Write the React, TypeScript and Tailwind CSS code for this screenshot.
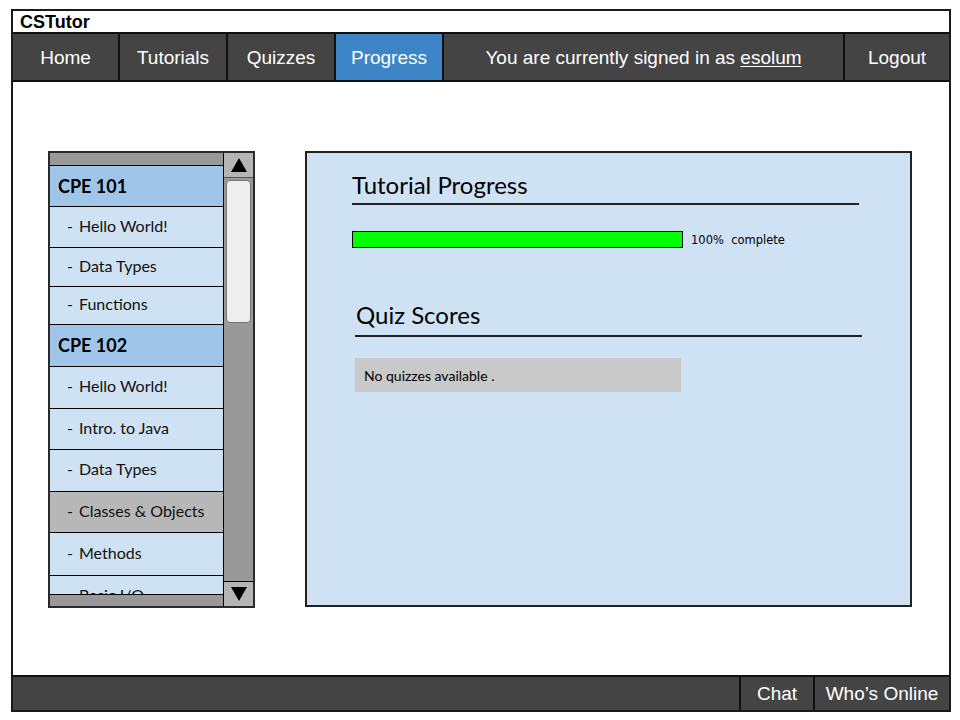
import React from "react";

const navItems = [
  { label: "Home", w: "w-[107px]" },
  { label: "Tutorials", w: "w-[108px]" },
  { label: "Quizzes", w: "w-[108px]" },
];

type Row = { label: string; kind: "head" | "item" | "sel"; h: string };

const rows: Row[] = [
  { label: "CPE 101", kind: "head", h: "h-[41px]" },
  { label: "Hello World!", kind: "item", h: "h-[41px]" },
  { label: "Data Types", kind: "item", h: "h-[39px]" },
  { label: "Functions", kind: "item", h: "h-[38px]" },
  { label: "CPE 102", kind: "head", h: "h-[42px]" },
  { label: "Hello World!", kind: "item", h: "h-[42px]" },
  { label: "Intro. to Java", kind: "item", h: "h-[41px]" },
  { label: "Data Types", kind: "item", h: "h-[42px]" },
  { label: "Classes & Objects", kind: "sel", h: "h-[41px]" },
  { label: "Methods", kind: "item", h: "h-[43px]" },
  { label: "Basic I/O", kind: "item", h: "h-[42px]" },
];

function ListRow({ r }: { r: Row }) {
  const bg =
    r.kind === "head" ? "bg-[#9fc5e8]" : r.kind === "sel" ? "bg-[#b7b7b7]" : "bg-[#cfe2f3]";
  return (
    <div className={`${r.h} shrink-0 border-t border-black ${bg} flex items-center`}>
      {r.kind === "head" ? (
        <span className="pl-[8px] text-[18px] font-bold text-black">{r.label}</span>
      ) : (
        <span className="pl-[17px] pb-[3px] text-[16px] text-[#111]">
          <span className="inline-block w-[12px]">-</span>
          {r.label}
        </span>
      )}
    </div>
  );
}

export default function App() {
  return (
    <div className="w-[960px] h-[720px] bg-white pt-[9px] pl-[11px] font-['Liberation_Sans',Arial,sans-serif]">
      <div className="w-[940px] h-[703px] border-2 border-[#1a1a1a] flex flex-col">
        {/* title */}
        <div className="h-[21px] shrink-0 flex items-center pl-[7px] text-[18px] font-bold text-black leading-none">
          CSTutor
        </div>
        {/* nav */}
        <div className="h-[50px] shrink-0 border-y-2 border-[#111] bg-[#444444] flex text-white text-[19px]">
          {navItems.map((n) => (
            <div
              key={n.label}
              className={`${n.w} shrink-0 border-r-2 border-[#111] flex items-center justify-center pt-[2px]`}
            >
              {n.label}
            </div>
          ))}
          <div className="w-[108px] shrink-0 border-r-2 border-[#111] bg-[#3d85c6] flex items-center justify-center pt-[2px]">
            Progress
          </div>
          <div className="flex-1 flex items-center justify-center pt-[2px]">
            <span>
              You are currently signed in as <span className="underline underline-offset-2">esolum</span>
            </span>
          </div>
          <div className="w-[106px] shrink-0 border-l-2 border-[#111] flex items-center justify-center pt-[2px]">
            Logout
          </div>
        </div>
        {/* main */}
        <div className="flex-1 flex pt-[69px] pl-[35px] gap-[50px] font-['Lato','Noto_Sans',sans-serif]">
          {/* left panel */}
          <div className="w-[207px] h-[457px] border-2 border-[#2a2a2a] flex">
            <div className="flex-1 flex flex-col overflow-hidden">
              <div className="h-[12px] shrink-0 bg-[#999999]" />
              <div className="flex-1 overflow-hidden flex flex-col">
                {rows.map((r, i) => (
                  <ListRow key={i} r={r} />
                ))}
              </div>
              <div className="h-[12px] shrink-0 bg-[#999999] border-t border-black" />
            </div>
            <div className="w-[30px] shrink-0 border-l border-black bg-[#999999] flex flex-col">
              <div className="h-[25px] shrink-0 bg-[#b5b5b5] border-b border-[#555] flex items-center justify-center">
                <svg width="16" height="14" viewBox="0 0 16 14">
                  <polygon points="8,0 16,14 0,14" fill="#000" />
                </svg>
              </div>
              <div className="flex-1 px-[2px] pt-[2px]">
                <div className="h-[143px] rounded-[4px] bg-[#eeeeee] border border-[#777]" />
              </div>
              <div className="h-[25px] shrink-0 bg-[#b5b5b5] border-t border-black flex items-center justify-center">
                <svg width="16" height="14" viewBox="0 0 16 14">
                  <polygon points="0,0 16,0 8,14" fill="#000" />
                </svg>
              </div>
            </div>
          </div>
          {/* right panel */}
          <div className="w-[607px] h-[456px] border-2 border-[#222] bg-[#cfe2f3] flex flex-col">
            <div className="ml-[45px] w-[507px] mt-[17px]">
              <div className="text-[24px] leading-[29px] text-black">Tutorial Progress</div>
              <div className="mt-[4px] h-[2px] bg-[#222]" />
              <div className="mt-[24px] flex items-center">
                <div className="w-[331px] h-[17px] bg-[#00ff00] border border-black" />
                <span className="ml-[8px] pt-[3px] text-[11.5px] text-black font-['DejaVu_Sans',Verdana,sans-serif] whitespace-pre">
                  100%  complete
                </span>
              </div>
            </div>
            <div className="ml-[48px] w-[507px] mt-[51px]">
              <div className="pl-[1px] text-[24px] leading-[29px] text-black">Quiz Scores</div>
              <div className="mt-[6px] h-[2px] bg-[#222]" />
              <div className="mt-[21px] w-[326px] h-[34px] bg-[#c9c9c9] flex items-center pl-[9px] text-[14px] text-black">
                No quizzes available .
              </div>
            </div>
          </div>
        </div>
        {/* footer */}
        <div className="h-[35px] shrink-0 border-t-2 border-[#111] bg-[#444444] flex justify-end text-white text-[19px]">
          <div className="w-[74px] border-l-2 border-[#111] flex items-center justify-center pt-[2px]">Chat</div>
          <div className="w-[136px] border-l-2 border-[#111] flex items-center justify-center pt-[2px]">
            Who’s Online
          </div>
        </div>
      </div>
    </div>
  );
}
